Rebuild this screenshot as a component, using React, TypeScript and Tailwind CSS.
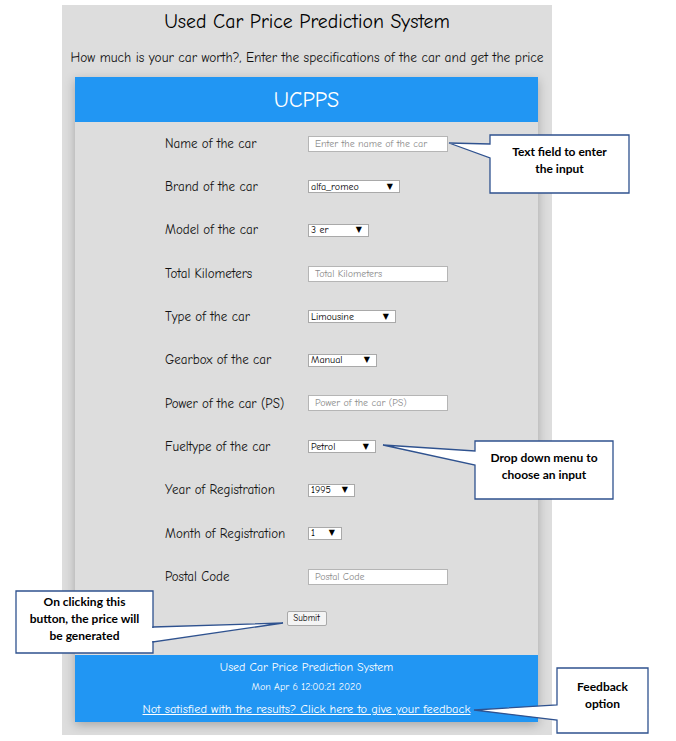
import React from 'react';

const comic = '[font-family:"Comic_Sans_MS","Comic_Neue","DejaVu_Sans",sans-serif]';

type Row = { label: string; kind: 'text' | 'select'; value: string; width?: string };

const rows: Row[] = [
  { label: 'Name of the car', kind: 'text', value: 'Enter the name of the car' },
  { label: 'Brand of the car', kind: 'select', value: 'alfa_romeo', width: 'w-[92px]' },
  { label: 'Model of the car', kind: 'select', value: '3 er', width: 'w-[61px]' },
  { label: 'Total Kilometers', kind: 'text', value: 'Total Kilometers' },
  { label: 'Type of the car', kind: 'select', value: 'Limousine', width: 'w-[88px]' },
  { label: 'Gearbox of the car', kind: 'select', value: 'Manual', width: 'w-[69px]' },
  { label: 'Power of the car (PS)', kind: 'text', value: 'Power of the car (PS)' },
  { label: 'Fueltype of the car', kind: 'select', value: 'Petrol', width: 'w-[68px]' },
  { label: 'Year of Registration', kind: 'select', value: '1995', width: 'w-[47px]' },
  { label: 'Month of Registration', kind: 'select', value: '1', width: 'w-[34px]' },
  { label: 'Postal Code', kind: 'text', value: 'Postal Code' },
];

const FakeSelect: React.FC<{ value: string; width?: string }> = ({ value, width }) => (
  <div className={`${width} h-[13px] bg-white border border-[#a9a9a9] flex items-center justify-between pl-[2px] pr-[6px]`}>
    <span className="text-[10px] leading-none text-black">{value}</span>
    <span className="text-[8px] leading-none text-black">▼</span>
  </div>
);

const TextField: React.FC<{ placeholder: string }> = ({ placeholder }) => (
  <div className="w-[140px] h-[16px] bg-white border border-[#b5b5b5] flex items-center pl-[6px]">
    <span className="text-[10px] leading-none text-[#8a8a8a]">{placeholder}</span>
  </div>
);

const Callout: React.FC<{ className: string; children: React.ReactNode }> = ({ className, children }) => (
  <div
    className={`absolute flex items-center justify-center text-center text-[12px] leading-[17px] font-bold text-black [font-family:Lato,"Liberation_Sans",sans-serif] ${className}`}
  >
    {children}
  </div>
);

export default function App() {
  return (
    <div className={`relative w-[676px] h-[741px] bg-white overflow-hidden ${comic}`}>
      <div className="ml-[62px] mt-[5px] w-[490px] h-[730px] bg-[#dddddd] pt-[5px] flex flex-col">
        <h1 className="text-center text-[19.8px] leading-[24px] text-black">Used Car Price Prediction System</h1>
        <p className="mt-[15px] text-center text-[13.4px] leading-[17px] text-[#111]">
          How much is your car worth?, Enter the specifications of the car and get the price
        </p>
        <div className="mt-[11px] ml-[13px] w-[463px] shadow-[0_3px_10px_rgba(0,0,0,0.25)]">
          <div className="h-[45px] bg-[#2196f3] flex items-center justify-center">
            <span className="text-white text-[22px] leading-none">UCPPS</span>
          </div>
          <div className="bg-[#dddddd] pb-[29px] flex flex-col">
            {rows.map((r) => (
              <div key={r.label} className="h-[43.3px] flex items-center pl-[90px]">
                <span className="w-[143px] text-[13px] text-[#111]">{r.label}</span>
                {r.kind === 'text' ? <TextField placeholder={r.value} /> : <FakeSelect value={r.value} width={r.width} />}
              </div>
            ))}
            <div className="mt-[13px] flex justify-center">
              <button className="h-[15px] w-[40px] bg-[#f4f4f4] border border-[#a9a9a9] rounded-[2px] text-[9px] leading-none text-black">
                Submit
              </button>
            </div>
          </div>
          <div className="h-[67px] bg-[#2196f3] flex flex-col items-center pt-[5px] text-white">
            <span className="text-[12px] leading-[14px]">Used Car Price Prediction System</span>
            <span className="mt-[7px] text-[10px] leading-[12px]">Mon Apr 6 12:00:21 2020</span>
            <a href="#" className="mt-[9px] text-[12.4px] leading-[14px] underline text-white">
              Not satisfied with the results? Click here to give your feedback
            </a>
          </div>
        </div>
      </div>

      {/* callout shapes */}
      <svg className="absolute inset-0" width="676" height="741" viewBox="0 0 676 741">
        <g fill="#ffffff" stroke="#2f528f" strokeWidth="1.3" strokeLinejoin="miter">
          <polygon points="490,135 629,135 629,193 490,193 490,158 449,143 490,144" />
          <polygon points="475,441 613,441 613,499 475,499 475,465 383,445 475,451" />
          <polygon points="16,591 153,591 153,653 16,653 16,591" />
          <polygon points="153,627 283,623 153,642" />
          <polygon points="557,668 648,668 648,733 557,733 557,720 474,710 557,705" />
        </g>
        <rect x="152" y="628" width="2" height="13" fill="#ffffff" />
      </svg>

      <Callout className="left-[490px] top-[131px] w-[139px] h-[58px]">Text field to enter<br />the input</Callout>
      <Callout className="left-[475px] top-[437px] w-[138px] h-[58px]">Drop down menu to<br />choose an input</Callout>
      <Callout className="left-[16px] top-[587px] w-[137px] h-[62px]">On clicking this<br />button, the price will<br />be generated</Callout>
      <Callout className="left-[557px] top-[662px] w-[91px] h-[65px]">Feedback<br />option</Callout>
    </div>
  );
}
